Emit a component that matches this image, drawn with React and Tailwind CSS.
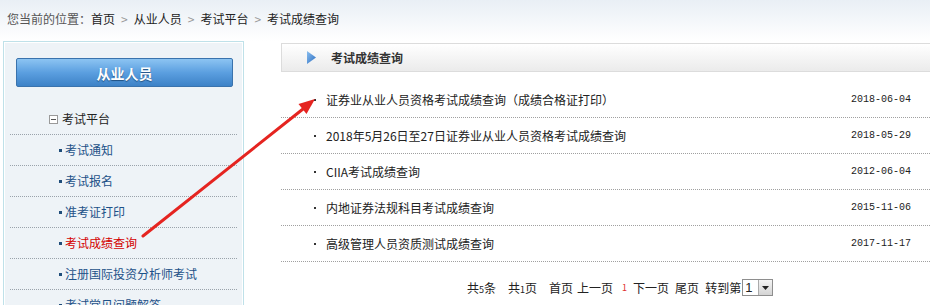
import React from "react";

const font = { fontFamily: '"Noto Sans CJK SC", "Liberation Sans", sans-serif' };

const sideItems = [
  { t: "考试通知" },
  { t: "考试报名" },
  { t: "准考证打印" },
  { t: "考试成绩查询", active: true },
  { t: "注册国际投资分析师考试" },
  { t: "考试常见问题解答" },
];

const rows = [
  { t: "证券业从业人员资格考试成绩查询（成绩合格证打印）", d: "2018-06-04" },
  { t: "2018年5月26日至27日证券业从业人员资格考试成绩查询", d: "2018-05-29" },
  { t: "CIIA考试成绩查询", d: "2012-06-04" },
  { t: "内地证券法规科目考试成绩查询", d: "2015-11-06" },
  { t: "高级管理人员资质测试成绩查询", d: "2017-11-17" },
];

export default function App() {
  return (
    <div
      className="relative w-[930px] h-[305px] overflow-hidden bg-white text-[12px] leading-none text-[#222]"
      style={font}
    >
      <div className="h-[41px] bg-gradient-to-b from-[#e9eff5] to-white pl-[7px] pt-[13px] flex items-start">
        <span className="text-[#555]">您当前的位置：</span>
        <span>首页</span>
        <span className="mx-[6px] text-[#999]">&gt;</span>
        <span>从业人员</span>
        <span className="mx-[6px] text-[#999]">&gt;</span>
        <span>考试平台</span>
        <span className="mx-[6px] text-[#999]">&gt;</span>
        <span>考试成绩查询</span>
      </div>

      <div className="flex items-start">
        <div className="ml-[3px] w-[241px] h-[280px] border border-[#bfe1e9] shadow-[inset_0_0_0_1px_#ffffff] bg-[#eef3f7] pt-[16px]">
          <div className="ml-[12px] w-[217px] h-[29px] rounded-[2px] border border-[#3a73ad] bg-gradient-to-b from-[#8cc4f2] via-[#5b9fe0] to-[#3d82c7] flex items-center justify-center text-white text-[14px] font-bold [text-shadow:0_1px_1px_#1f4f80]">
            从业人员
          </div>
          <div className="mx-[6px] mt-[17px] h-[31px] border-b border-dotted border-[#9aa3ab] flex items-center pl-[39px]">
            <span className="w-[9px] h-[9px] border border-[#9a9a9a] bg-white flex items-center justify-center mr-[4px]">
              <span className="w-[5px] h-[1px] bg-[#555]" />
            </span>
            <span className="text-[#222]">考试平台</span>
          </div>
          {sideItems.map((it) => (
            <div
              key={it.t}
              className="mx-[6px] h-[31px] border-b border-dotted border-[#9aa3ab] flex items-center pl-[49px]"
            >
              <span className="w-[3px] h-[3px] bg-[#1f4d7a] mr-[3px]" />
              <span className={it.active ? "text-[#d40000]" : "text-[#1d5188]"}>{it.t}</span>
            </div>
          ))}
        </div>

        <div className="ml-[37px] flex-1 pt-[2px]">
          <div className="h-[29px] border border-r-0 border-[#dcdcdc] bg-gradient-to-b from-white to-[#ebebeb] flex items-center pl-[25px]">
            <svg width="9" height="13" viewBox="0 0 9 13" className="mr-[15px]">
              <defs>
                <linearGradient id="tri" x1="0" y1="0" x2="1" y2="1">
                  <stop offset="0" stopColor="#8cc0f0" />
                  <stop offset="1" stopColor="#2a6cc0" />
                </linearGradient>
              </defs>
              <polygon points="0,0 9,6.5 0,13" fill="url(#tri)" />
            </svg>
            <span className="font-bold text-[#333]">考试成绩查询</span>
          </div>
          <div className="mt-[10px]">
            {rows.map((r) => (
              <div
                key={r.t}
                className="h-[36px] border-b border-dotted border-[#a0a0a0] flex items-center pl-[33px] pr-[19px]"
              >
                <span className="w-[2px] h-[2px] bg-[#333] mr-[10px]" />
                <span className="flex-1 text-[#222]">{r.t}</span>
                <span
                  className="text-[10px] text-[#222]"
                  style={{ fontFamily: '"Liberation Mono", monospace' }}
                >
                  {r.d}
                </span>
              </div>
            ))}
          </div>
          <div className="mt-[17px] ml-[186px] flex items-center text-[#222]">
            <span>共<span className="text-[9px]">5</span>条</span>
            <span className="ml-[12px]">共<span className="text-[9px]">1</span>页</span>
            <span className="ml-[12px]">首页</span>
            <span className="ml-[4px]">上一页</span>
            <span className="ml-[9px] text-[9px] text-[#e03030]">1</span>
            <span className="ml-[6px]">下一页</span>
            <span className="ml-[6px]">尾页</span>
            <span className="ml-[6px]">转到第</span>
            <span className="ml-[1px] h-[17px] w-[31px] border border-[#8e8e8e] bg-white flex items-center">
              <span className="flex-1 pl-[2px] text-[13px]" style={{ fontFamily: '"Liberation Sans", sans-serif' }}>1</span>
              <span className="w-[14px] h-[15px] bg-gradient-to-b from-[#f4f4f4] to-[#d4d4d4] border-l border-[#aaa] flex items-center justify-center">
                <svg width="7" height="4" viewBox="0 0 7 4"><polygon points="0,0 7,0 3.5,4" fill="#222" /></svg>
              </span>
            </span>
          </div>
        </div>
      </div>

      <svg className="absolute left-0 top-0 pointer-events-none" width="930" height="305">
        <line x1="143" y1="236" x2="303" y2="109" stroke="#e52420" strokeWidth="3" strokeLinecap="round" />
        <polygon points="315,99 306.5,114 298.5,104" fill="#e52420" />
      </svg>
    </div>
  );
}
